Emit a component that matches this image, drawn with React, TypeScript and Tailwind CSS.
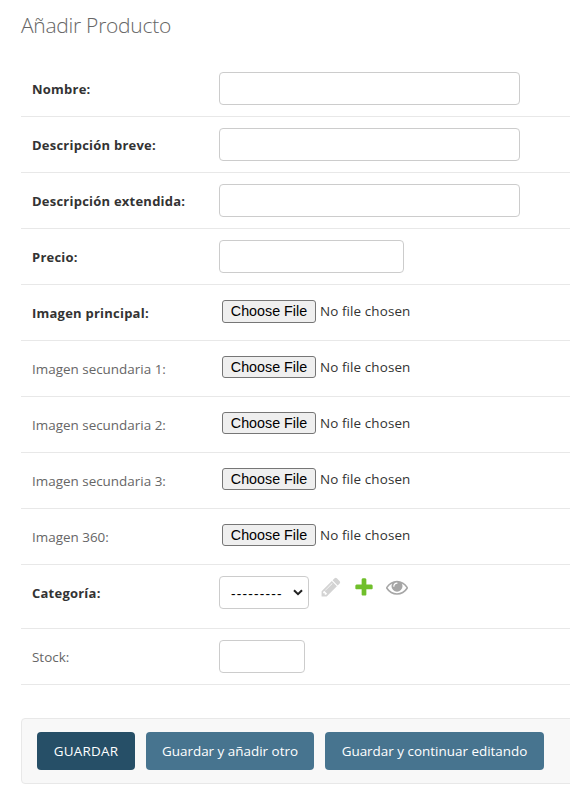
import type { ReactNode } from "react";

const PENCIL =
  "M491 1536l91-91-235-235-91 91v107h128v128h107zm523-928q0-22-22-22-10 0-17 7l-542 542q-7 7-7 17 0 22 22 22 10 0 17-7l542-542q7-7 7-17zm-54-192l416 416-832 832h-416v-416zm683 96q0 53-37 90l-166 166-416-416 166-165q36-38 90-38 53 0 91 38l235 234q37 39 37 91z";
const PLUS =
  "M1600 796v192q0 40-28 68t-68 28h-416v416q0 40-28 68t-68 28h-192q-40 0-68-28t-28-68v-416h-416q-40 0-68-28t-28-68v-192q0-40 28-68t68-28h416v-416q0-40 28-68t68-28h192q40 0 68 28t28 68v416h416q40 0 68 28t28 68z";
const EYE =
  "M1664 960q-152-236-381-353 61 104 61 225 0 185-131.5 316.5t-316.5 131.5-316.5-131.5-131.5-316.5q0-121 61-225-229 117-381 353 133 205 333.5 326.5t434.5 121.5 434.5-121.5 333.5-326.5zm-720-384q0-20-14-34t-34-14q-125 0-214.5 89.5t-89.5 214.5q0 20 14 34t34 14 34-14 14-34q0-86 61-147t147-61q20 0 34-14t14-34zm848 384q0 34-20 69-140 230-376.5 368.5t-499.5 138.5-499.5-139-376.5-368q-20-35-20-69t20-69q140-229 376.5-368t499.5-139 499.5 139 376.5 368q20 35 20 69z";

function Icon({ d, className }: { d: string; className: string }) {
  return (
    <svg viewBox="0 0 1792 1792" className={`size-[22px] fill-current ${className}`}>
      <path d={d} />
    </svg>
  );
}

function Row({ label, required, tall, children }: { label: string; required?: boolean; tall?: boolean; children: ReactNode }) {
  return (
    <div className={`flex items-start border-b border-[#e8e8e8] pt-[11px] pl-[11px] ${tall ? "h-16" : "h-14"}`}>
      <label
        className={`w-[187px] shrink-0 pt-2 leading-[18px] whitespace-nowrap ${
          required ? "text-[13px] font-bold tracking-[0.23px] text-[#333]" : "text-[#666]"
        }`}
      >
        {label}
      </label>
      {children}
    </div>
  );
}

function TextInput({ className }: { className: string }) {
  return <input className={`h-[33px] rounded border border-[#ccc] bg-white px-1.5 outline-none ${className}`} />;
}

function FileInput({ className = "h-[22px]" }: { className?: string }) {
  return (
    <div className="flex items-start pt-[4px] pl-[3px]">
      <button
        type="button"
        className={`w-[94px] rounded-[3px] border border-[#767676] bg-[#efefef] font-['Liberation_Sans',Arial,sans-serif] text-[14.3px] leading-[20px] whitespace-nowrap text-black ${className}`}
      >
        Choose File
      </button>
      <span className="pl-1 leading-[22px] tracking-[0.1px] whitespace-nowrap text-[#333]">No file chosen</span>
    </div>
  );
}

export default function App() {
  return (
    <div className="h-[800px] w-[570px] overflow-hidden bg-white pl-[21px] font-['Open_Sans','Noto_Sans',sans-serif] text-[13.45px] text-[#333]">
      <h1 className="h-[61px] pt-3 text-[21px] leading-[26px] font-light tracking-[-0.27px] text-[#666]">Añadir Producto</h1>
      <form>
        <Row label="Nombre:" required>
          <TextInput className="w-[301px]" />
        </Row>
        <Row label="Descripción breve:" required>
          <TextInput className="w-[301px]" />
        </Row>
        <Row label="Descripción extendida:" required>
          <TextInput className="w-[301px]" />
        </Row>
        <Row label="Precio:" required>
          <TextInput className="w-[185px]" />
        </Row>
        <Row label="Imagen principal:" required>
          <FileInput className="h-[23px] pb-px" />
        </Row>
        <Row label="Imagen secundaria 1:">
          <FileInput />
        </Row>
        <Row label="Imagen secundaria 2:">
          <FileInput />
        </Row>
        <Row label="Imagen secundaria 3:">
          <FileInput />
        </Row>
        <Row label="Imagen 360:">
          <FileInput />
        </Row>
        <Row label="Categoría:" required tall>
          <div className="flex h-[33px] w-[90px] items-center justify-between rounded border border-[#ccc] pr-[5px] pl-[11px]">
            <span className="pt-0.5 text-[14px] leading-[30px] tracking-[1.25px] text-black">---------</span>
            <svg viewBox="0 0 10 7" className="h-[7px] w-[10px] fill-none stroke-[#222] stroke-2">
              <path d="M1 1.2L5 5.2L9 1.2" />
            </svg>
          </div>
          <div className="flex gap-[11px] pl-[11px]">
            <Icon d={PENCIL} className="text-[#d3d3d3]" />
            <Icon d={PLUS} className="text-[#70bf2b]" />
            <Icon d={EYE} className="text-[#a6a6a6]" />
          </div>
        </Row>
        <Row label="Stock:">
          <TextInput className="w-[86px]" />
        </Row>
        <div className="mt-[33px] -mr-2 flex h-[66px] gap-[11px] rounded border border-[#e8e8e8] bg-[#f8f8f8] pt-[13px] pl-[15px] text-white">
          <button type="button" className="h-[38px] w-[98px] rounded bg-[#264f67] pt-px tracking-[0.2px] whitespace-nowrap">
            GUARDAR
          </button>
          <button type="button" className="h-[38px] w-[168px] rounded bg-[#47748f] pt-px whitespace-nowrap">
            Guardar y añadir otro
          </button>
          <button type="button" className="h-[38px] w-[219px] rounded bg-[#47748f] pt-px whitespace-nowrap">
            Guardar y continuar editando
          </button>
        </div>
      </form>
    </div>
  );
}
